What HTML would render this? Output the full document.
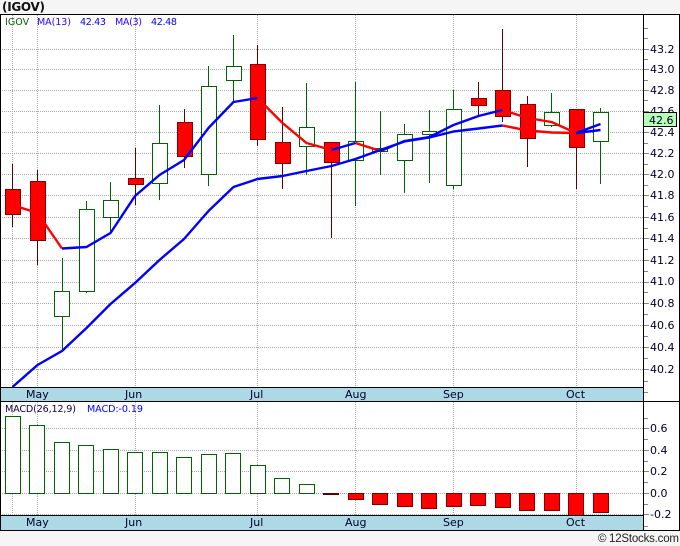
<!DOCTYPE html>
<html><head><meta charset="utf-8"><title>IGOV</title>
<style>
html,body{margin:0;padding:0;background:#f5f5f5}
svg{display:block}
text{font-family:"DejaVu Sans",sans-serif}
.ax{font-size:11px;fill:#00002a}
.dt{font-size:11px;fill:#00002a}
.lg{font-size:9.6px}
</style></head><body>
<svg xmlns="http://www.w3.org/2000/svg" width="680" height="546" viewBox="0 0 680 546">
<rect width="680" height="546" fill="#f5f5f5"/>
<rect x="0" y="14" width="680" height="516" fill="#fff"/>
<text x="2" y="11" style="font-size:12px;font-weight:bold;fill:#111" textLength="43">(IGOV)</text>
<path fill="none" stroke="#a8a8a8" stroke-dasharray="1 1" d="M0 49.5H643M0 69.5H643M0 90.5H643M0 111.5H643M0 132.5H643M0 153.5H643M0 174.5H643M0 195.5H643M0 217.5H643M0 238.5H643M0 260.5H643M0 282.5H643M0 303.5H643M0 325.5H643M0 347.5H643M0 369.5H643M0 428.5H643M0 450.5H643M0 471.5H643M0 493.5H643M0 514.5H643M12.5 15V387M37.5 15V387M135.5 15V387M257.5 15V387M355.5 15V387M453.5 15V387M576.5 15V387M12.5 402V515M37.5 402V515M135.5 402V515M257.5 402V515M355.5 402V515M453.5 402V515M576.5 402V515"/>
<path fill="none" stroke="#006400" d="M62.5 258V350M86.5 201V293M110.5 182V233M159.5 105V200M208.5 66V186M233.5 35V102M306.5 83V175M355.5 82V206M380.5 111V175M404.5 124V193M429.5 110V183M453.5 90V189M551.5 93V127M600.5 108V184"/>
<path fill="none" stroke="#600000" d="M12.5 164V227M37.5 170V265M135.5 148V205M184.5 109V168M257.5 45V146M282.5 107V189M331.5 142V238M478.5 82V115M502.5 29V122M527.5 96V167M576.5 109V189"/>
<g fill="#fff" stroke="#006400">
<rect x="54.5" y="291.5" width="15" height="25"/>
<rect x="79.5" y="209.5" width="15" height="82"/>
<rect x="103.5" y="200.5" width="15" height="17"/>
<rect x="152.5" y="143.5" width="15" height="40"/>
<rect x="201.5" y="86.5" width="15" height="88"/>
<rect x="226.5" y="66.5" width="15" height="14"/>
<rect x="299.5" y="127.5" width="15" height="19"/>
<rect x="348.5" y="141.5" width="15" height="19"/>
<rect x="372.5" y="148.5" width="15" height="3"/>
<rect x="397.5" y="134.5" width="15" height="26"/>
<rect x="422.5" y="131.5" width="14" height="3"/>
<rect x="446.5" y="109.5" width="15" height="76"/>
<rect x="544.5" y="112.5" width="15" height="13"/>
<rect x="593.5" y="112.5" width="15" height="29"/>
</g>
<g fill="#ff0000" stroke="#800000">
<rect x="5.5" y="189.5" width="15" height="25"/>
<rect x="30.5" y="181.5" width="15" height="59"/>
<rect x="128.5" y="178.5" width="15" height="6"/>
<rect x="177.5" y="122.5" width="15" height="34"/>
<rect x="250.5" y="64.5" width="15" height="75"/>
<rect x="275.5" y="142.5" width="15" height="21"/>
<rect x="324.5" y="142.5" width="15" height="20"/>
<rect x="471.5" y="98.5" width="15" height="7"/>
<rect x="495.5" y="90.5" width="15" height="26"/>
<rect x="520.5" y="104.5" width="15" height="34"/>
<rect x="569.5" y="109.5" width="15" height="38"/>
</g>
<g fill="none" stroke-width="2.4" stroke-linejoin="round">
<path stroke="#ff0000" d="M12.5 205L37.5 213L62 248.5M257.5 98L282.5 123L306.5 143L331.5 150M355.5 143L380.5 151M502.5 110L527.5 118L551.5 122L576 133M502.5 125.5L527.5 130.5L551.5 132.5L576 133"/>
<path stroke="#0000ff" d="M62 248.5L86.5 247L110.5 233L135 196L159.5 175L184 160L208.5 128L233.5 102L257.5 98M331.5 150L355.5 143M380.5 151L404.5 141L429.5 137L453.5 125L478.5 116L502.5 110M576 133L600.5 124M12.5 387L37.5 365L62 351L86.5 328L110.5 304L135 283L159.5 260L184 239L208.5 211L233.5 187L257.5 179L282.5 176L306.5 171L331.5 166L355.5 159L380.5 150L404.5 141.5L429.5 137.5L453.5 131.5L478.5 128.5L502.5 125.5M576 133L600.5 130"/>
</g>
<text class="lg" x="5" y="25" fill="#006400">IGOV</text>
<text class="lg" x="37" y="25" fill="#3000ff" textLength="34">MA(13)</text>
<text class="lg" x="80" y="25" fill="#0000ff" textLength="26">42.43</text>
<text class="lg" x="115" y="25" fill="#3000ff" textLength="27">MA(3)</text>
<text class="lg" x="151" y="25" fill="#0000ff" textLength="26">42.48</text>
<g fill="#fff" stroke="#006400">
<rect x="5.5" y="416.5" width="15" height="77"/>
<rect x="29.5" y="425.5" width="15" height="68"/>
<rect x="54.5" y="442.5" width="15" height="51"/>
<rect x="78.5" y="445.5" width="15" height="48"/>
<rect x="103.5" y="449.5" width="15" height="44"/>
<rect x="127.5" y="452.5" width="15" height="41"/>
<rect x="152.5" y="452.5" width="15" height="41"/>
<rect x="176.5" y="457.5" width="15" height="36"/>
<rect x="201.5" y="454.5" width="15" height="39"/>
<rect x="225.5" y="453.5" width="15" height="40"/>
<rect x="250.5" y="465.5" width="15" height="28"/>
<rect x="274.5" y="478.5" width="15" height="15"/>
<rect x="299.5" y="484.5" width="15" height="9"/>
</g>
<rect x="323" y="493" width="16" height="2" fill="#600000"/>
<g fill="#ff0000" stroke="#800000">
<rect x="348.5" y="493.5" width="15" height="6"/>
<rect x="372.5" y="493.5" width="15" height="11"/>
<rect x="397.5" y="493.5" width="15" height="13"/>
<rect x="421.5" y="493.5" width="15" height="15"/>
<rect x="446.5" y="493.5" width="15" height="13"/>
<rect x="470.5" y="493.5" width="15" height="12"/>
<rect x="495.5" y="493.5" width="15" height="14"/>
<rect x="519.5" y="493.5" width="15" height="17"/>
<rect x="544.5" y="493.5" width="15" height="17"/>
<rect x="568.5" y="493.5" width="15" height="22"/>
<rect x="593.5" y="493.5" width="15" height="19"/>
</g>
<text class="lg" x="5" y="412" fill="#100040" textLength="71">MACD(26,12,9)</text>
<text class="lg" x="87" y="412" fill="#0000ff" textLength="56">MACD:-0.19</text>
<rect x="1" y="388" width="642" height="13" fill="#add8e6"/>
<rect x="1" y="516" width="642" height="14" fill="#add8e6"/>
<path fill="none" stroke="#000" d="M0 14.5H680M0 387.5H643M0 401.5H680M0 515.5H643M0 530.5H680M0.5 14V531M643.5 14V531M679.5 14V531"/>
<path fill="none" stroke="#888" d="M644 28.5h4M644 38.5h4M644 49.5h5M644 59.5h4M644 69.5h5M644 80.5h4M644 90.5h5M644 100.5h4M644 111.5h5M644 121.5h4M644 132.5h5M644 143.5h4M644 153.5h5M644 164.5h4M644 174.5h5M644 185.5h4M644 195.5h5M644 206.5h4M644 217.5h5M644 228.5h4M644 238.5h5M644 249.5h4M644 260.5h5M644 271.5h4M644 282.5h5M644 292.5h4M644 303.5h5M644 314.5h4M644 325.5h5M644 336.5h4M644 347.5h5M644 358.5h4M644 369.5h5M644 381.5h4M644 392.5h4M644 418.5h4M644 428.5h5M644 439.5h4M644 450.5h5M644 461.5h4M644 471.5h5M644 482.5h4M644 493.5h5M644 504.5h4M644 514.5h5M644 526.5h4"/>
<g class="ax">
<text class="ax" x="650" y="53">43.2</text>
<text class="ax" x="650" y="73">43.0</text>
<text class="ax" x="650" y="94">42.8</text>
<text class="ax" x="650" y="115">42.6</text>
<text class="ax" x="650" y="136">42.4</text>
<text class="ax" x="650" y="157">42.2</text>
<text class="ax" x="650" y="178">42.0</text>
<text class="ax" x="650" y="199">41.8</text>
<text class="ax" x="650" y="221">41.6</text>
<text class="ax" x="650" y="242">41.4</text>
<text class="ax" x="650" y="264">41.2</text>
<text class="ax" x="650" y="285">41.0</text>
<text class="ax" x="650" y="307">40.8</text>
<text class="ax" x="650" y="329">40.6</text>
<text class="ax" x="650" y="351">40.4</text>
<text class="ax" x="650" y="373">40.2</text>
<text class="ax" x="650" y="432">0.6</text>
<text class="ax" x="650" y="454">0.4</text>
<text class="ax" x="650" y="475">0.2</text>
<text class="ax" x="650" y="497">0.0</text>
<text class="ax" x="650" y="518">-0.2</text>
</g>
<rect x="643.5" y="112.5" width="33" height="14" fill="#b6fdb6" stroke="#000"/>
<text class="ax" x="649" y="124">42.6</text>
<text class="dt" x="26" y="398">May</text>
<text class="dt" x="125" y="398">Jun</text>
<text class="dt" x="250" y="398">Jul</text>
<text class="dt" x="345" y="398">Aug</text>
<text class="dt" x="443" y="398">Sep</text>
<text class="dt" x="566" y="398">Oct</text>
<text class="dt" x="26" y="526">May</text>
<text class="dt" x="125" y="526">Jun</text>
<text class="dt" x="250" y="526">Jul</text>
<text class="dt" x="345" y="526">Aug</text>
<text class="dt" x="443" y="526">Sep</text>
<text class="dt" x="566" y="526">Oct</text>
<text x="598" y="542" style="font-family:'Liberation Sans',sans-serif;font-size:11.5px;fill:#222">©</text>
<text x="609" y="542" style="font-family:'Liberation Sans',sans-serif;font-size:11.5px;fill:#222" textLength="70">12Stocks.com</text>
</svg>
</body></html>
